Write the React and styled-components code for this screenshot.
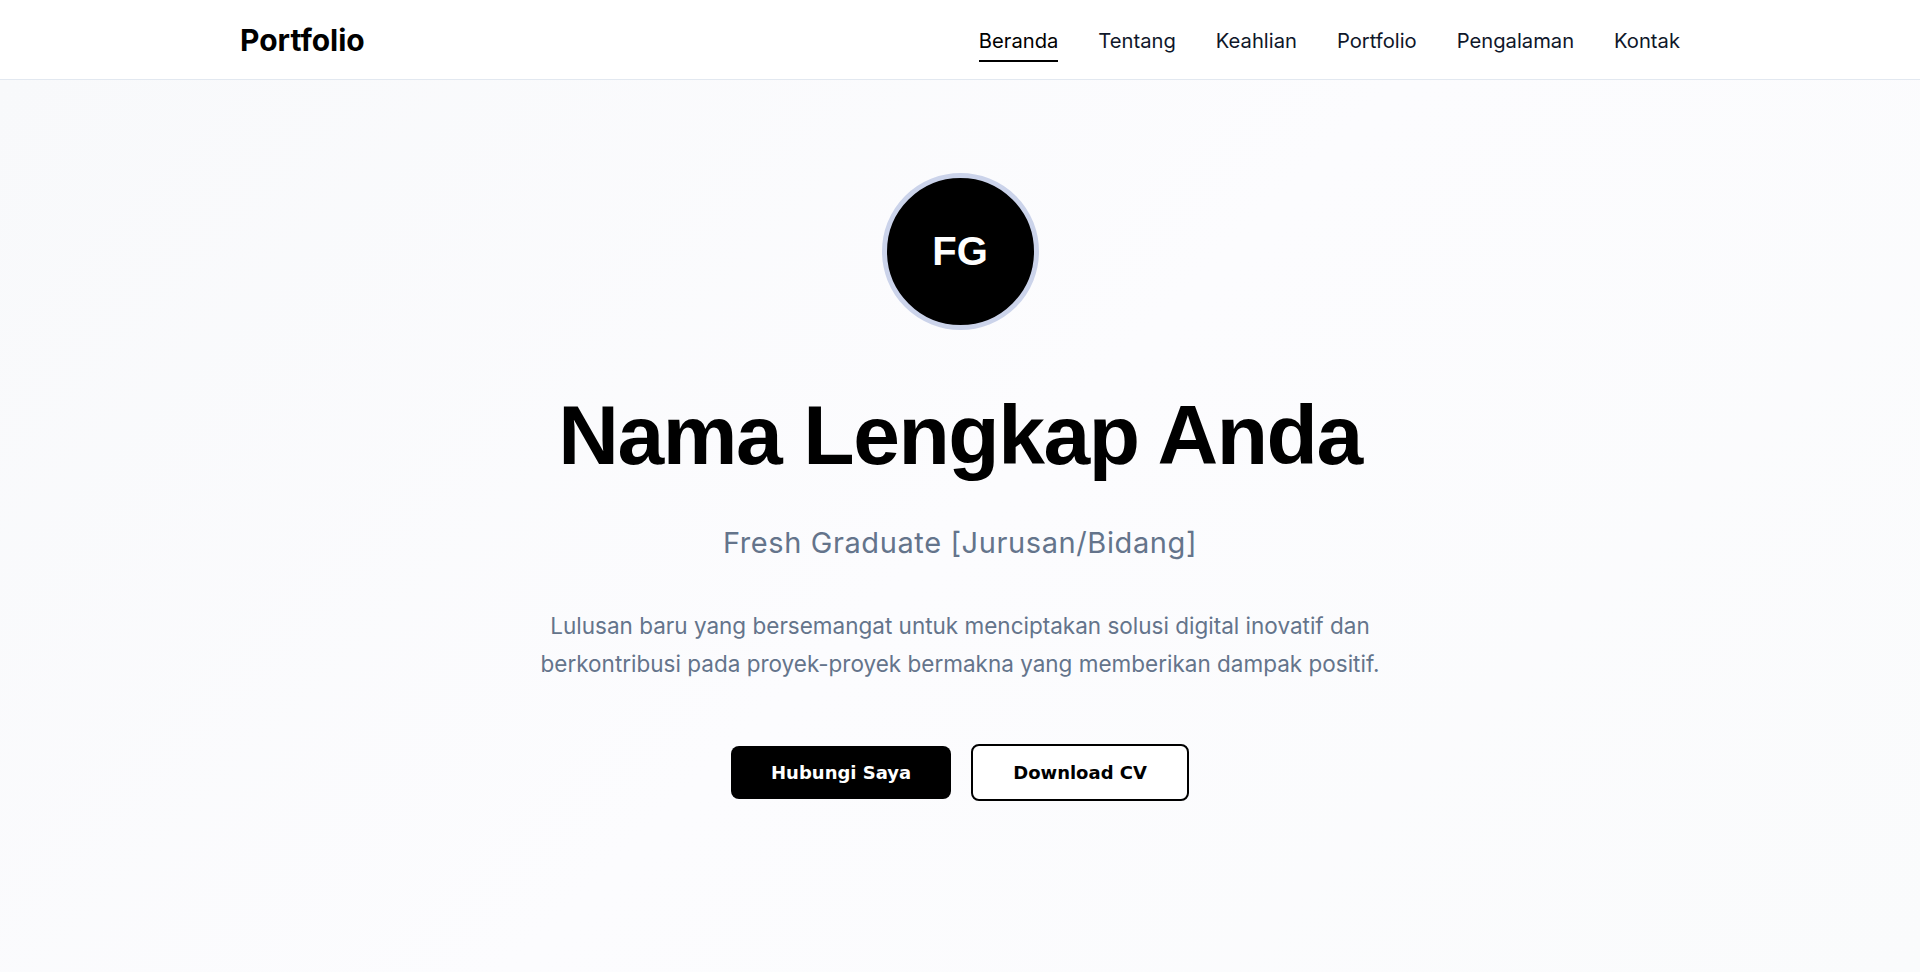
import styled, { createGlobalStyle } from "styled-components";

/* ---------- Global ---------- */

const GlobalStyle = createGlobalStyle`
  * {
    box-sizing: border-box;
  }

  body {
    margin: 0;
    font-family: Inter, "Noto Sans", sans-serif;
    color: #0f172a;
    background: #ffffff;
  }
`;

/* ---------- Navbar ---------- */

const Navbar = styled.header`
  height: 80px;
  background: #ffffff;
  border-bottom: 1px solid #e2e8f0;
`;

const NavInner = styled.div`
  max-width: 1440px;
  height: 100%;
  margin: 0 auto;
  display: flex;
  align-items: center;
  justify-content: space-between;
`;

const Logo = styled.a`
  font-size: 30px;
  font-weight: 700;
  color: #000000;
  text-decoration: none;
`;

const NavLinks = styled.nav`
  display: flex;
  align-items: center;
  gap: 40px;
  margin-top: 3px;
`;

/* Nav item, active one gets an underline */
const NavLink = styled.a`
  position: relative;
  font-size: 20.2px;
  line-height: 1.5;
  color: ${({ $active }) => ($active ? "#000000" : "#0f172a")};
  text-decoration: none;

  &::after {
    content: "";
    position: absolute;
    left: 0;
    right: 0;
    bottom: -6px;
    height: 2px;
    background: #000000;
    transform: scaleX(${({ $active }) => ($active ? 1 : 0)});
  }
`;

/* ---------- Hero ---------- */

const Hero = styled.section`
  min-height: calc(100vh - 80px);
  padding: 93px 24px 80px;
  display: flex;
  flex-direction: column;
  align-items: center;
  text-align: center;
  background: linear-gradient(135deg, #f8f9fb 0%, #fcfcfe 50%, #fafbfc 100%);
`;

const Avatar = styled.div`
  width: 157px;
  height: 157px;
  border-radius: 50%;
  border: 5px solid #cbd3ea;
  background: #000000;
  display: flex;
  align-items: center;
  justify-content: center;
  margin-bottom: 55px;

  font-family: "Liberation Sans", Arial, sans-serif;
  font-size: 40px;
  font-weight: 700;
  color: #ffffff;
`;

const Title = styled.h1`
  margin: 0 0 36px;
  font-family: "Liberation Sans", Arial, sans-serif;
  font-size: 84px;
  font-weight: 700;
  line-height: 1.2;
  letter-spacing: -0.017em;
  color: #000000;
`;

const Subtitle = styled.p`
  margin: 0 0 43px;
  font-size: 29px;
  line-height: 1.45;
  letter-spacing: 0.6px;
  color: #64748b;
`;

const Description = styled.p`
  max-width: 860px;
  margin: 0 0 61px;
  font-size: 22.5px;
  line-height: 1.7;
  color: #64748b;
`;

const Actions = styled.div`
  display: flex;
  align-items: center;
  gap: 20px;
`;

/* Primary = solid black, otherwise outlined */
const Button = styled.button`
  padding: 16px 40px;
  border-radius: 8px;
  font-family: "DejaVu Sans", sans-serif;
  font-size: 18px;
  font-weight: 700;
  cursor: pointer;

  border: ${({ $primary }) => ($primary ? "none" : "2px solid #000000")};
  background: ${({ $primary }) => ($primary ? "#000000" : "#ffffff")};
  color: ${({ $primary }) => ($primary ? "#ffffff" : "#000000")};
`;

/* ---------- Component ---------- */

const links = ["Beranda", "Tentang", "Keahlian", "Portfolio", "Pengalaman", "Kontak"];

const App = () => {
  return (
    <>
      <GlobalStyle />

      <Navbar>
        <NavInner>
          <Logo href="#">Portfolio</Logo>
          <NavLinks>
            {links.map((label, i) => (
              <NavLink key={label} href="#" $active={i === 0}>
                {label}
              </NavLink>
            ))}
          </NavLinks>
        </NavInner>
      </Navbar>

      <Hero>
        <Avatar>FG</Avatar>
        <Title>Nama Lengkap Anda</Title>
        <Subtitle>Fresh Graduate [Jurusan/Bidang]</Subtitle>
        <Description>
          Lulusan baru yang bersemangat untuk menciptakan solusi digital inovatif dan
          berkontribusi pada proyek-proyek bermakna yang memberikan dampak positif.
        </Description>
        <Actions>
          <Button $primary>Hubungi Saya</Button>
          <Button>Download CV</Button>
        </Actions>
      </Hero>
    </>
  );
};

export default App;
